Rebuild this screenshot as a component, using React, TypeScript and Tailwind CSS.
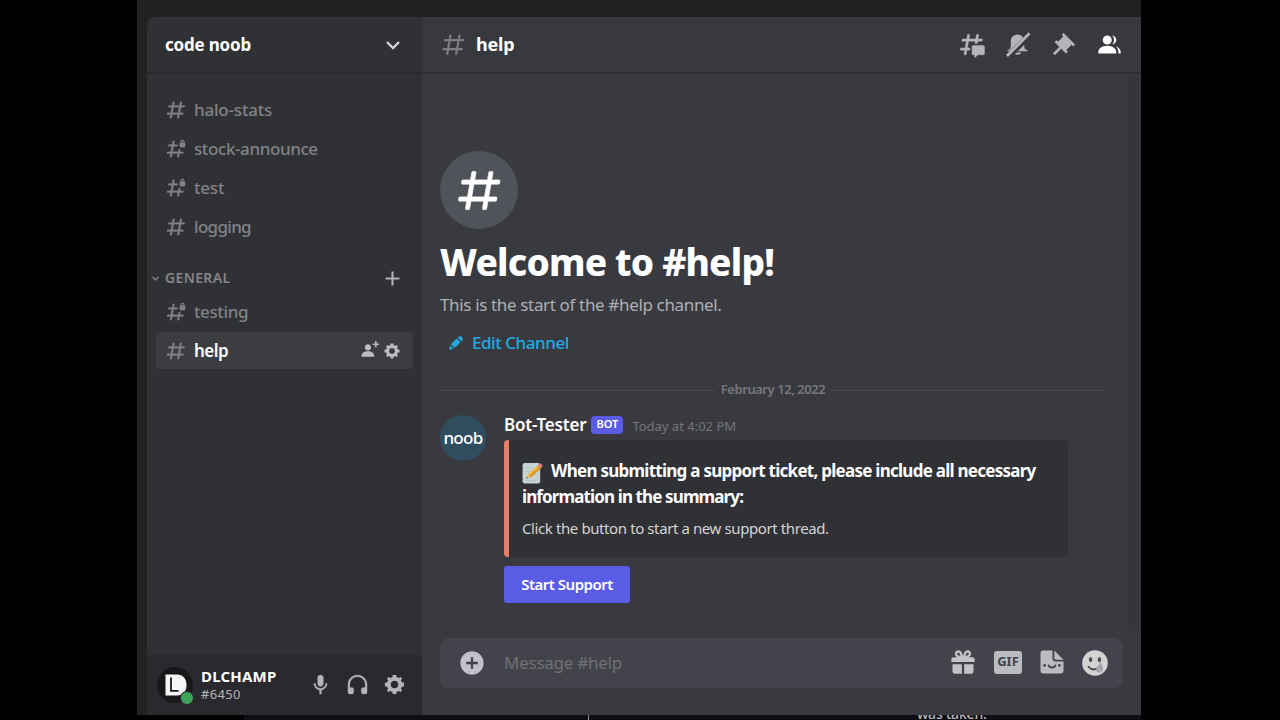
import React from "react";

type IconProps = { d: string; className: string };

function Icon({ d, className }: IconProps) {
  return (
    <svg viewBox="0 0 24 24" fill="currentColor" fillRule="evenodd" className={`block shrink-0 ${className}`}>
      <path d={d} />
    </svg>
  );
}

const HASH =
  "M5.88657 21C5.57547 21 5.3399 20.7189 5.39427 20.4126L6 17H2.59511C2.28449 17 2.04905 16.7198 2.10259 16.4138L2.27759 15.4138C2.31946 15.1746 2.52722 15 2.77011 15H6.35L7.41 9H4.00511C3.69449 9 3.45905 8.71977 3.51259 8.41381L3.68759 7.41381C3.72946 7.17456 3.93722 7 4.18011 7H7.76L8.39677 3.41262C8.43914 3.17391 8.64664 3 8.88907 3H9.87344C10.1845 3 10.4201 3.28107 10.3657 3.58738L9.76 7H15.76L16.3968 3.41262C16.4391 3.17391 16.6466 3 16.8891 3H17.8734C18.1845 3 18.4201 3.28107 18.3657 3.58738L17.76 7H21.1649C21.4755 7 21.711 7.28023 21.6574 7.58619L21.4824 8.58619C21.4406 8.82544 21.2328 9 20.9899 9H17.41L16.35 15H19.7549C20.0655 15 20.301 15.2802 20.2474 15.5862L20.0724 16.5862C20.0306 16.8254 19.8228 17 19.5799 17H16L15.3632 20.5874C15.3209 20.8261 15.1134 21 14.8709 21H13.8866C13.5755 21 13.3399 20.7189 13.3943 20.4126L14 17H8L7.36325 20.5874C7.32088 20.8261 7.11337 21 6.87094 21H5.88657ZM9.41045 9L8.35045 15H14.3504L15.4104 9H9.41045Z";
const HASH_LOCKED =
  "M14 8C14 7.44772 13.5523 7 13 7H9.76L10.3657 3.58738C10.4201 3.28107 10.1845 3 9.87344 3H8.88907C8.64664 3 8.43914 3.17391 8.39677 3.41262L7.76 7H4.18011C3.93722 7 3.72946 7.17456 3.68759 7.41381L3.51259 8.41381C3.45905 8.71977 3.69449 9 4.00511 9H7.41L6.35 15H2.77011C2.52722 15 2.31946 15.1746 2.27759 15.4138L2.10259 16.4138C2.04905 16.7198 2.28449 17 2.59511 17H6L5.39427 20.4126C5.3399 20.7189 5.57547 21 5.88657 21H6.87094C7.11337 21 7.32088 20.8261 7.36325 20.5874L8 17H14L13.3943 20.4126C13.3399 20.7189 13.5755 21 13.8866 21H14.8709C15.1134 21 15.3209 20.8261 15.3632 20.5874L16 17H19.5799C19.8228 17 20.0306 16.8254 20.0724 16.5862L20.2474 15.5862C20.301 15.2802 20.0655 15 19.7549 15H16.35L16.6758 13.1558C16.7823 12.5529 16.3186 12 15.7063 12C15.2286 12 14.8199 12.3429 14.7368 12.8133L14.3504 15H8.35045L9.41045 9H13C13.5523 9 14 8.55228 14 8ZM21.025 5V4C21.025 2.88 20.05 2 19 2C17.95 2 17 2.88 17 4V5C16.4477 5 16 5.44772 16 6V9C16 9.55228 16.4477 10 17 10H21C21.5523 10 22 9.55228 22 9V5.975C22 5.43652 21.5635 5 21.025 5ZM20 5H18V4C18 3.42857 18.4667 3 19 3C19.4667 3 20 3.42857 20 4V5Z";
const THREADS =
  "M5.433 21C5.358 21 5.302 20.9325 5.315 20.859L6 17H2.143C2.068 17 2.012 16.933 2.025 16.859L2.333 15.099C2.343 15.042 2.392 15 2.451 15H6.35L7.41 9H3.553C3.478 9 3.422 8.933 3.435 8.859L3.743 7.099C3.753 7.042 3.802 7 3.861 7H7.76L8.452 3.099C8.463 3.042 8.512 3 8.57 3H10.327C10.401 3 10.458 3.067 10.445 3.141L9.76 7H15.76L16.452 3.099C16.463 3.042 16.512 3 16.57 3H18.327C18.401 3 18.458 3.067 18.445 3.141L17.76 7H21.617C21.692 7 21.748 7.067 21.735 7.141L21.427 8.901C21.417 8.958 21.367 9 21.309 9H17.41L17.05 11.04H15.05L15.41 9H9.41L8.35 15H10.56V17H8L7.307 20.901C7.297 20.958 7.248 21 7.189 21H5.433ZM13.44 12.96C12.91 12.96 12.48 13.39 12.48 13.92V20.221C12.48 20.752 12.91 21.181 13.44 21.181H14.4C14.533 21.181 14.64 21.289 14.64 21.421V23.46C14.64 23.668 14.887 23.777 15.041 23.638L17.486 21.429C17.662 21.27 17.892 21.181 18.129 21.181H22.56C23.09 21.181 23.52 20.752 23.52 20.221V13.92C23.52 13.39 23.09 12.96 22.56 12.96H13.44Z";
const BELL =
  "M18 9V14C18 15.657 19.344 17 21 17V18H3V17C4.656 17 6 15.657 6 14V9C6 5.686 8.686 3 12 3C15.314 3 18 5.686 18 9ZM12 21C10.524 21 9.248 20.19 8.555 19H15.445C14.752 20.19 13.476 21 12 21Z";
const PIN =
  "M22 12L12.101 2.101L10.686 3.514L12.101 4.929L7.151 9.879L5.736 8.465L4.322 9.88L8.565 14.122L2.908 19.778L4.322 21.192L9.979 15.536L14.222 19.778L15.636 18.364L14.222 16.95L19.171 12L20.586 13.414L22 12Z";
const MEMBERS =
  "M14 8.006C14 10.211 12.206 12.006 10 12.006C7.795 12.006 6 10.211 6 8.006C6 5.801 7.794 4.006 10 4.006C12.206 4.006 14 5.801 14 8.006ZM2 19.006C2 15.473 5.29 13.006 10 13.006C14.711 13.006 18 15.473 18 19.006V20.006H2V19.006ZM20 20.006H22V19.006C22 16.443 20.27 14.442 17.521 13.535C19.062 14.913 20 16.806 20 19.006V20.006ZM14.883 11.908C16.666 11.504 18 9.908 18 8.006C18 5.969 16.469 4.282 14.497 4.037C15.432 5.095 16 6.485 16 8.006C16 9.449 15.489 10.774 14.638 11.81C14.72 11.842 14.802 11.874 14.883 11.908Z";
const MIC =
  "M14.99 11C14.99 12.66 13.66 14 12 14C10.34 14 9 12.66 9 11V5C9 3.34 10.34 2 12 2C13.66 2 15 3.34 15 5L14.99 11ZM12 16.1C14.76 16.1 17.3 14 17.3 11H19C19 14.42 16.28 17.24 13 17.72V22H11V17.72C7.72 17.23 5 14.41 5 11H6.7C6.7 14 9.24 16.1 12 16.1Z";
const HEADPHONES =
  "M12 2.003C6.486 2.003 2 6.488 2 12.003V20.003C2 21.107 2.895 22.003 4 22.003H6C7.104 22.003 8 21.107 8 20.003V17.003C8 15.899 7.104 15.003 6 15.003H4V12.003C4 7.591 7.589 4.003 12 4.003C16.411 4.003 20 7.591 20 12.003V15.003H18C16.896 15.003 16 15.899 16 17.003V20.003C16 21.107 16.896 22.003 18 22.003H20C21.104 22.003 22 21.107 22 20.003V12.003C22 6.488 17.514 2.003 12 2.003Z";
const GEAR =
  "M19.738 10H22V14H19.739C19.498 14.931 19.1 15.798 18.565 16.564L20 18L18 20L16.565 18.564C15.797 19.099 14.932 19.498 14 19.738V22H10V19.738C9.069 19.498 8.203 19.099 7.436 18.564L6 20L4 18L5.436 16.564C4.901 15.799 4.502 14.932 4.262 14H2V10H4.262C4.502 9.068 4.9 8.202 5.436 7.436L4 6L6 4L7.436 5.436C8.202 4.9 9.068 4.502 10 4.262V2H14V4.261C14.932 4.502 15.797 4.9 16.565 5.435L18 3.999L20 5.999L18.564 7.436C19.099 8.202 19.498 9.069 19.738 10ZM12 16C14.209 16 16 14.209 16 12C16 9.791 14.209 8 12 8C9.791 8 8 9.791 8 12C8 14.209 9.791 16 12 16Z";
const ADD_PERSON =
  "M21 3H24V5H21V8H19V5H16V3H19V0H21V3ZM10 12C12.205 12 14 10.205 14 8C14 5.795 12.205 4 10 4C7.795 4 6 5.795 6 8C6 10.205 7.795 12 10 12ZM10 13C5.289 13 2 15.467 2 19V20H18V19C18 15.467 14.711 13 10 13Z";
const CHEVRON = "M16.59 8.59L12 13.17L7.41 8.59L6 10L12 16L18 10L16.59 8.59Z";
const PLUS = "M20 10.8H13.2V4H10.8V10.8H4V13.2H10.8V20H13.2V13.2H20Z";
const PENCIL =
  "M19.293 9.83L19.941 9.183C21.353 7.771 21.353 5.472 19.941 4.059C18.529 2.647 16.229 2.647 14.817 4.059L14.17 4.707L19.293 9.83ZM12.896 5.977L5.185 13.691L10.309 18.813L18.02 11.099L12.896 5.977ZM4.119 20.97L8.759 19.811L4.187 15.239L3.027 19.88C2.95 20.186 3.04 20.511 3.263 20.734C3.487 20.957 3.812 21.046 4.119 20.97Z";
const ATTACH =
  "M12 2C6.486 2 2 6.487 2 12C2 17.515 6.486 22 12 22C17.514 22 22 17.515 22 12C22 6.487 17.514 2 12 2ZM17 13H13V17H11V13H7V11H11V7H13V11H17V13Z";
const GIFT =
  "M16.886 7.999H20C21.104 7.999 22 8.896 22 9.999V11.999H2V9.999C2 8.896 2.897 7.999 4 7.999H7.114C6.663 7.764 6.236 7.477 5.879 7.121C4.709 5.951 4.709 4.048 5.879 2.879C7.012 1.746 8.986 1.746 10.121 2.877C11.758 4.514 11.979 7.595 11.998 7.941L12 7.999L12.002 7.942C12.022 7.596 12.242 4.515 13.879 2.878C15.014 1.745 16.986 1.746 18.121 2.877C19.29 4.049 19.29 5.952 18.121 7.121C17.764 7.477 17.337 7.764 16.886 7.999ZM7.293 5.707C6.903 5.316 6.903 4.682 7.293 4.292C7.481 4.103 7.732 4 8 4C8.268 4 8.519 4.103 8.707 4.292C9.297 4.882 9.641 5.94 9.825 6.822C8.945 6.639 7.879 6.293 7.293 5.707ZM14.174 6.824C14.359 5.941 14.702 4.883 15.293 4.293C15.481 4.103 15.732 4 16 4C16.268 4 16.519 4.103 16.706 4.291C17.096 4.682 17.097 5.316 16.707 5.707C16.116 6.298 15.057 6.642 14.174 6.824ZM3 13.999V19.999C3 21.102 3.897 21.999 5 21.999H11V13.999H3ZM13 13.999V21.999H19C20.104 21.999 21 21.102 21 19.999V13.999H13Z";

function MutedBell() {
  return (
    <svg viewBox="0 0 24 24" fill="currentColor" className="block size-[27px]">
      <path d={BELL} />
      <path d="M3 23.5L24 2.5" stroke="#38393e" strokeWidth="5.2" />
      <path d="M2.6 22.3L22.7 2.1" stroke="currentColor" strokeWidth="2.5" />
    </svg>
  );
}

function Sticker() {
  return (
    <svg viewBox="0 0 24 24" className="block size-6">
      <path d="M3 0.5H12.5V8.5C12.5 10.2 13.8 11.5 15.5 11.5H23.5V21C23.5 22.4 22.4 23.5 21 23.5H3C1.6 23.5 0.5 22.4 0.5 21V3C0.5 1.6 1.6 0.5 3 0.5Z" fill="#bbbcc0" />
      <path d="M14.3 0.5L23.5 9.7H16C15 9.7 14.3 9 14.3 8Z" fill="#bbbcc0" />
      <circle cx="4.6" cy="15.4" r="1.4" fill="#43444b" />
      <circle cx="19.4" cy="15.4" r="1.4" fill="#43444b" />
      <path d="M8.6 15.4C9.4 18.2 14.6 18.2 15.4 15.4" fill="none" stroke="#43444b" strokeWidth="1.8" strokeLinecap="round" />
    </svg>
  );
}

function Smiley() {
  return (
    <svg viewBox="0 0 26 26" className="block size-[26px]">
      <circle cx="13" cy="13" r="12.8" fill="#d3d3d4" />
      <ellipse cx="8.6" cy="9.6" rx="1.7" ry="2.6" fill="#4d4e52" />
      <ellipse cx="17.4" cy="9.6" rx="1.7" ry="2.6" fill="#4d4e52" />
      <path d="M6.5 16.8C9.5 20 13.5 20 17 17.5" fill="none" stroke="#4d4e52" strokeWidth="1.9" strokeLinecap="round" />
      <path d="M18 11.4C20 15 21.6 17.4 20.9 20C20 23.2 15.4 23.4 13.9 20.8C13.2 18.8 17 15.6 18 11.4Z" fill="#a4a6aa" />
    </svg>
  );
}

function Memo() {
  return (
    <svg viewBox="0 0 22 22" className="mt-[5px] block size-[22px] shrink-0">
      <rect x="0.6" y="1" width="17.6" height="20.4" rx="2.2" fill="#c6d3d6" />
      <path d="M3 6H10M3 9.5H8M3 18.5H14" stroke="#b5c3c7" strokeWidth="1" />
      <path d="M4.4 16.6L6 12L15.4 3.6L18.6 6.8L9 15.4Z" fill="#f0b83e" />
      <path d="M7.4 13.8L17 5.2L18.6 6.8L9 15.4Z" fill="#d9962c" />
      <path d="M15.4 3.6L17.6 1.7C18.8 0.8 21.2 3 20.4 4.8L18.6 6.8Z" fill="#d77a76" />
      <path d="M4.4 16.6L6 12L9 15.4Z" fill="#dcbb94" />
      <path d="M4.4 16.6L5 14.9L6.2 16Z" fill="#3b3b3d" />
    </svg>
  );
}

type Channel = { name: string; locked?: boolean; tracking: string };

const topChannels: Channel[] = [
  { name: "halo-stats", tracking: "tracking-[-0.2px]" },
  { name: "stock-announce", locked: true, tracking: "tracking-[-0.4px]" },
  { name: "test", locked: true, tracking: "tracking-[-0.2px]" },
  { name: "logging", tracking: "tracking-[-0.7px]" },
];

function ChannelRow({ name, locked, tracking }: Channel) {
  return (
    <div className="flex h-[37px] items-center pl-[9px] text-[#818287]">
      <Icon d={locked ? HASH_LOCKED : HASH} className="size-[22px] stroke-current stroke-[0.3px]" />
      <span className={`ml-[7px] text-[17px] font-medium ${tracking}`}>{name}</span>
    </div>
  );
}

function Sidebar() {
  return (
    <aside className="flex w-[275px] shrink-0 flex-col overflow-hidden rounded-tl-lg bg-[#303135]">
      <div className="flex h-[57px] items-center justify-between border-b-2 border-[#29292d] pr-[19px] pl-[18px]">
        <span className="text-[17px] font-bold tracking-[-0.2px] text-white">code noob</span>
        <svg viewBox="0 0 20 20" className="block size-5" fill="none" stroke="#d4d5d7" strokeWidth="2.3">
          <path d="M4 7L10 13L16 7" />
        </svg>
      </div>
      <nav className="flex flex-1 flex-col gap-[2px] px-[9px] pt-[17px]">
        {topChannels.map((c) => (
          <ChannelRow key={c.name} {...c} />
        ))}
        <div className="mt-[14px] flex h-[30px] items-center pt-[4px] text-[#85868b]">
          <Icon d={CHEVRON} className="-ml-[7px] size-[13px] stroke-current" />
          <span className="ml-[3px] text-[14px] leading-[20px] font-semibold tracking-[0.35px] pb-px">GENERAL</span>
          <Icon d={PLUS} className="mr-[10px] ml-auto size-[21px] text-[#b0b1b4]" />
        </div>
        <ChannelRow name="testing" locked tracking="tracking-[-0.4px]" />
        <div className="flex h-[37px] items-center rounded-[4px] bg-[#3b3d41] pr-[12px] pl-[9px]">
          <Icon d={HASH} className="size-[22px] stroke-current stroke-[0.3px] text-[#818287]" />
          <span className="ml-[7px] text-[17px] font-semibold tracking-[-0.5px] text-white">help</span>
          <Icon d={ADD_PERSON} className="ml-auto size-[19px] text-[#bcbdc0]" />
          <Icon d={GEAR} className="ml-[4px] size-[18px] text-[#bcbdc0]" />
        </div>
      </nav>
      <footer className="flex h-[60px] items-center bg-[#2a2a2e] pr-[16px] pl-[10px] text-[#b3b4b7]">
        <div className="relative size-9 rounded-full bg-[#18181a]">
          <svg viewBox="0 0 36 36" className="block size-9">
            <path d="M8.5 7.5H20C26 7.5 29.5 12 29.5 18C29.5 25 26 28.5 20 28.5H8.5Z" fill="#f5f5f6" />
            <path d="M14 10.5V23.8H21.5" fill="none" stroke="#18181a" strokeWidth="1.8" />
          </svg>
          <span className="absolute right-0 bottom-[-1px] size-[12px] rounded-full bg-[#3fa45c] ring-1 ring-[#2a2a2e]" />
        </div>
        <div className="ml-[8px] flex flex-col">
          <span className="text-[15px] leading-[18px] font-bold tracking-[0.2px] text-white">DLCHAMP</span>
          <span className="text-[13px] leading-[18px] tracking-[0.3px]">#6450</span>
        </div>
        <div className="mb-[2px] ml-auto flex items-center gap-[14px]">
          <Icon d={MIC} className="size-[23px] stroke-current stroke-[0.3px]" />
          <Icon d={HEADPHONES} className="size-[23px] stroke-current stroke-[0.3px]" />
          <Icon d={GEAR} className="size-[23px]" />
        </div>
      </footer>
    </aside>
  );
}

function ChatHeader() {
  return (
    <header className="flex h-[57px] shrink-0 items-center border-b-2 border-[#2f3035] bg-[#38393e] pr-[18px] pl-[18px] text-[#b4b5b8]">
      <Icon d={HASH} className="size-[27px] text-[#7c7d82]" />
      <span className="ml-[9px] text-[18px] font-bold tracking-[-0.2px] text-white">help</span>
      <div className="ml-auto flex items-center gap-[19px]">
        <Icon d={THREADS} className="size-[27px] stroke-current stroke-[0.4px]" />
        <MutedBell />
        <Icon d={PIN} className="size-[27px] stroke-current stroke-[0.6px]" />
        <Icon d={MEMBERS} className="size-[27px] text-white" />
      </div>
    </header>
  );
}

function Message() {
  return (
    <article className="mt-[14px] flex">
      <div className="mt-[2px] flex size-[46px] items-center justify-center rounded-full bg-[#304c5f]">
        <span className="text-[17px] font-medium tracking-[-0.7px] text-white">noob</span>
      </div>
      <div className="ml-[18px] flex flex-col items-start">
        <div className="flex h-[27px] items-center pb-[4px]">
          <span className="text-[17px] font-semibold tracking-[-0.2px] text-white">Bot-Tester</span>
          <span className="ml-[5px] flex h-[18px] w-[32px] items-center justify-center rounded-[4px] bg-[#5a5ce6] text-[11px] font-semibold text-white">
            BOT
          </span>
          <span className="ml-[9px] pt-[5px] text-[13px] text-[#74757b]">Today at 4:02 PM</span>
        </div>
        <div className="flex h-[117px] w-[564px] flex-col rounded-[4px] border-l-[5px] border-[#e57f6b] bg-[#303134] pt-[18px] pl-[13px]">
          <div className="flex h-[25px] items-center text-[17px] font-bold text-white">
            <Memo />
            <span className="ml-[7px] tracking-[-0.74px]">When submitting a support ticket, please include all necessary</span>
          </div>
          <div className="flex h-[25px] items-center pt-[2px] text-[17px] font-bold tracking-[-0.88px] text-white">information in the summary:</div>
          <div className="mt-[9px] flex h-[23px] items-center text-[15px] tracking-[-0.4px] text-[#d3d4d6]">
            Click the button to start a new support thread.
          </div>
        </div>
        <button className="mt-[9px] flex h-[37px] w-[126px] items-center justify-center rounded-[3px] bg-[#5a5ce6] text-[15px] font-semibold tracking-[-0.5px] text-white">
          Start Support
        </button>
      </div>
    </article>
  );
}

function Composer() {
  return (
    <div className="mr-[18px] ml-[18px] flex h-[50px] items-center rounded-[9px] bg-[#43444b] pr-[15px] pl-[18px]">
      <Icon d={ATTACH} className="size-[28px] text-[#c1c1c9]" />
      <span className="ml-[18px] text-[17px] tracking-[-0.25px] text-[#6f7077]">Message #help</span>
      <div className="ml-auto flex items-center pb-[2px]">
        <Icon d={GIFT} className="size-[28px] text-[#c3c4c8]" />
        <span className="ml-[17px] flex h-[23px] w-[28px] items-center justify-center rounded-[3px] bg-[#bbbcc0] text-[13px] font-bold text-[#43444b]">
          GIF
        </span>
        <div className="ml-[18px]">
          <Sticker />
        </div>
        <div className="mt-px ml-[18px]">
          <Smiley />
        </div>
      </div>
    </div>
  );
}

function Chat() {
  return (
    <main className="flex min-w-0 flex-1 flex-col bg-[#393a40]">
      <ChatHeader />
      <div className="flex h-[558px] shrink-0">
        <section className="flex flex-1 flex-col pt-[77px] pl-[18px]">
          <div className="flex size-[78px] items-center justify-center rounded-full bg-[#505359]">
            <Icon d={HASH} className="size-[51px] stroke-current stroke-[0.3px] text-white" />
          </div>
          <h1 className="mt-[8px] flex h-[50px] items-center text-[37px] font-extrabold tracking-[-0.8px] text-white">Welcome to #help!</h1>
          <p className="mt-[6px] flex h-[24px] items-center text-[17px] tracking-[-0.35px] text-[#adafb4]">This is the start of the #help channel.</p>
          <div className="mt-[14px] flex h-[24px] items-center pl-[7px] text-[#22a9e0]">
            <Icon d={PENCIL} className="size-[18px]" />
            <span className="ml-[7px] text-[17px] font-medium tracking-[-0.45px]">Edit Channel</span>
          </div>
          <div className="mt-[26px] mr-[22px] flex h-[18px] items-center gap-[6px]">
            <span className="h-px flex-1 bg-[#494a51]" />
            <span className="text-[13px] font-semibold tracking-[-0.45px] text-[#77787e]">February 12, 2022</span>
            <span className="h-px flex-1 bg-[#494a51]" />
          </div>
          <Message />
        </section>
        <div className="mt-[2px] mr-[2px] w-[11px] rounded-[5px] bg-[#35363a]" />
      </div>
      <div className="h-[6px]" />
      <Composer />
    </main>
  );
}

export default function App() {
  return (
    <div className="h-[720px] w-[1280px] overflow-hidden bg-black font-['Noto_Sans',sans-serif] whitespace-nowrap">
      <div className="ml-[137px] flex h-[715px] w-[1004px] bg-[#222222] pt-[17px] pl-[10px]">
        <Sidebar />
        <Chat />
      </div>
      <div className="ml-[244px] flex h-[5px] w-[897px] overflow-hidden bg-[#0e0e14]">
        <span className="ml-[344px] h-[5px] w-px bg-[#8a8a8a]" />
        <span className="-mt-[10px] ml-[328px] text-[14px] leading-[18px] font-medium tracking-[-0.2px] text-[#b9b9b9]">was taken.</span>
      </div>
    </div>
  );
}
